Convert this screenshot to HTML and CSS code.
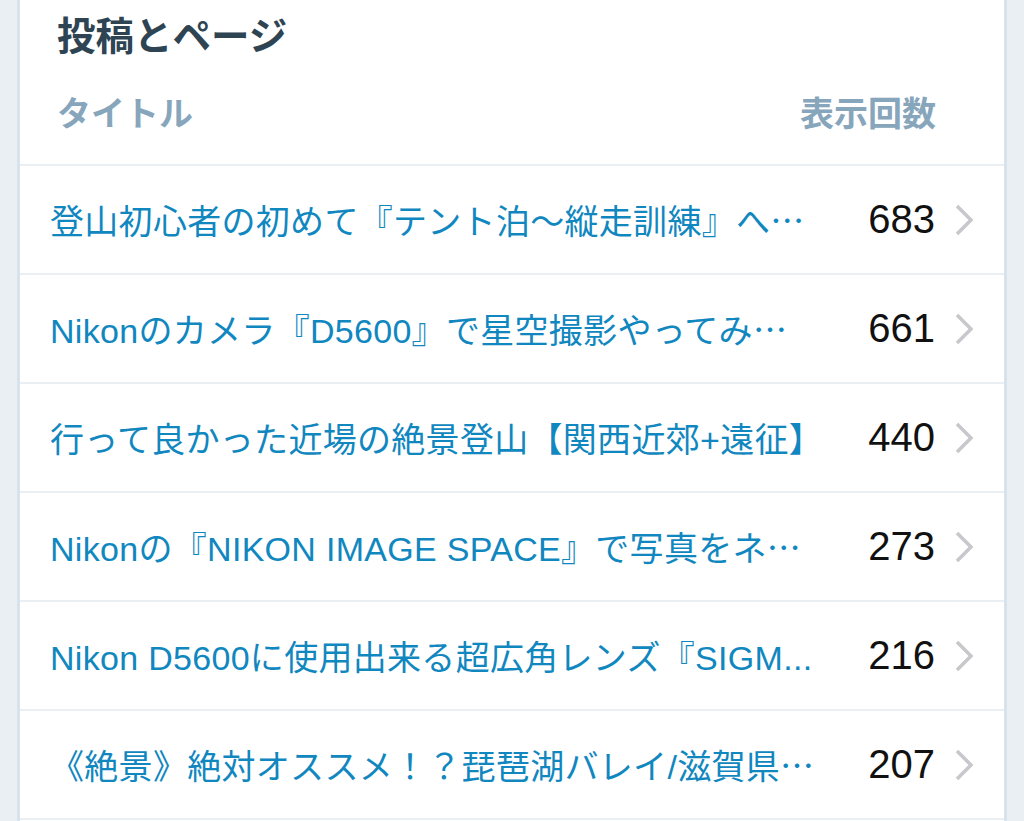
FILE: index.html
```html
<!DOCTYPE html>
<html lang="ja">
<head>
    <meta charset="utf-8">
    <title>投稿とページ</title>
    <link rel="stylesheet" href="styles.css">
</head>
<body>
    <div class="card">
        <h2 class="card-title">投稿とページ</h2>
        <div class="table-head">
            <span>タイトル</span>
            <span>表示回数</span>
        </div>
        <ul class="stats">
            <li class="stat-row">
                <a class="stat-title" href="#">登山初心者の初めて『テント泊〜縦走訓練』へ<span class="more">…</span></a>
                <span class="stat-count">683</span>
                <svg class="chevron" width="18" height="32" viewBox="0 0 18 32"><polyline points="2,2 16,16 2,30"/></svg>
            </li>
            <li class="stat-row">
                <a class="stat-title" href="#">Nikonのカメラ『D5600』で星空撮影やってみ<span class="more">…</span></a>
                <span class="stat-count">661</span>
                <svg class="chevron" width="18" height="32" viewBox="0 0 18 32"><polyline points="2,2 16,16 2,30"/></svg>
            </li>
            <li class="stat-row">
                <a class="stat-title" href="#">行って良かった近場の絶景登山【関西近郊+遠征】</a>
                <span class="stat-count">440</span>
                <svg class="chevron" width="18" height="32" viewBox="0 0 18 32"><polyline points="2,2 16,16 2,30"/></svg>
            </li>
            <li class="stat-row">
                <a class="stat-title" href="#">Nikonの『NIKON IMAGE SPACE』で写真をネ<span class="more">…</span></a>
                <span class="stat-count">273</span>
                <svg class="chevron" width="18" height="32" viewBox="0 0 18 32"><polyline points="2,2 16,16 2,30"/></svg>
            </li>
            <li class="stat-row">
                <a class="stat-title" href="#">Nikon D5600に使用出来る超広角レンズ『SIGM...</a>
                <span class="stat-count">216</span>
                <svg class="chevron" width="18" height="32" viewBox="0 0 18 32"><polyline points="2,2 16,16 2,30"/></svg>
            </li>
            <li class="stat-row">
                <a class="stat-title" href="#">《絶景》絶対オススメ！？琵琶湖バレイ/滋賀県<span class="more">…</span></a>
                <span class="stat-count">207</span>
                <svg class="chevron" width="18" height="32" viewBox="0 0 18 32"><polyline points="2,2 16,16 2,30"/></svg>
            </li>
        </ul>
    </div>
</body>
</html>
```

FILE: styles.css
```css
html, body {
    margin: 0;
    background: #e9eff3;
    font-family: "Liberation Sans", "Noto Sans CJK JP", sans-serif;
    overflow: hidden;
}
.card {
    margin: 0 17px;
    background: #fff;
    border-left: 3px solid #d9e3ea;
    border-right: 3px solid #d9e3ea;
    min-height: 821px;
}
.card-title {
    margin: 0;
    padding: 10px 0 0 37px;
    font-size: 38.5px;
    line-height: 46px;
    font-weight: bold;
    color: #2e4453;
    font-family: "Noto Sans CJK JP", sans-serif;
}
.table-head {
    display: flex;
    justify-content: space-between;
    margin-top: 34px;
    padding: 0 68px 30px 37px;
    font-size: 34px;
    line-height: 44px;
    font-weight: bold;
    color: #87a6bc;
    font-family: "Noto Sans CJK JP", sans-serif;
    border-bottom: 2px solid #e9eff3;
}
.stats {
    list-style: none;
    margin: 0;
    padding: 0;
}
.stat-row {
    display: flex;
    align-items: center;
    height: 107px;
    padding: 0 31px 0 30px;
    border-bottom: 2px solid #e9eff3;
}
.stat-title {
    flex: 1;
    min-width: 0;
    margin-right: 20px;
    font-size: 34px;
    letter-spacing: 0.3px;
    color: #1187c0;
    text-decoration: none;
    white-space: nowrap;
    overflow: hidden;
}
.more {
    font-family: "Noto Sans CJK JP", sans-serif;
}
.stat-count {
    font-size: 40px;
    color: #111;
}
.chevron {
    margin-left: 20px;
    flex: none;
    fill: none;
    stroke: #c7c7cc;
    stroke-width: 3.5;
}
```
